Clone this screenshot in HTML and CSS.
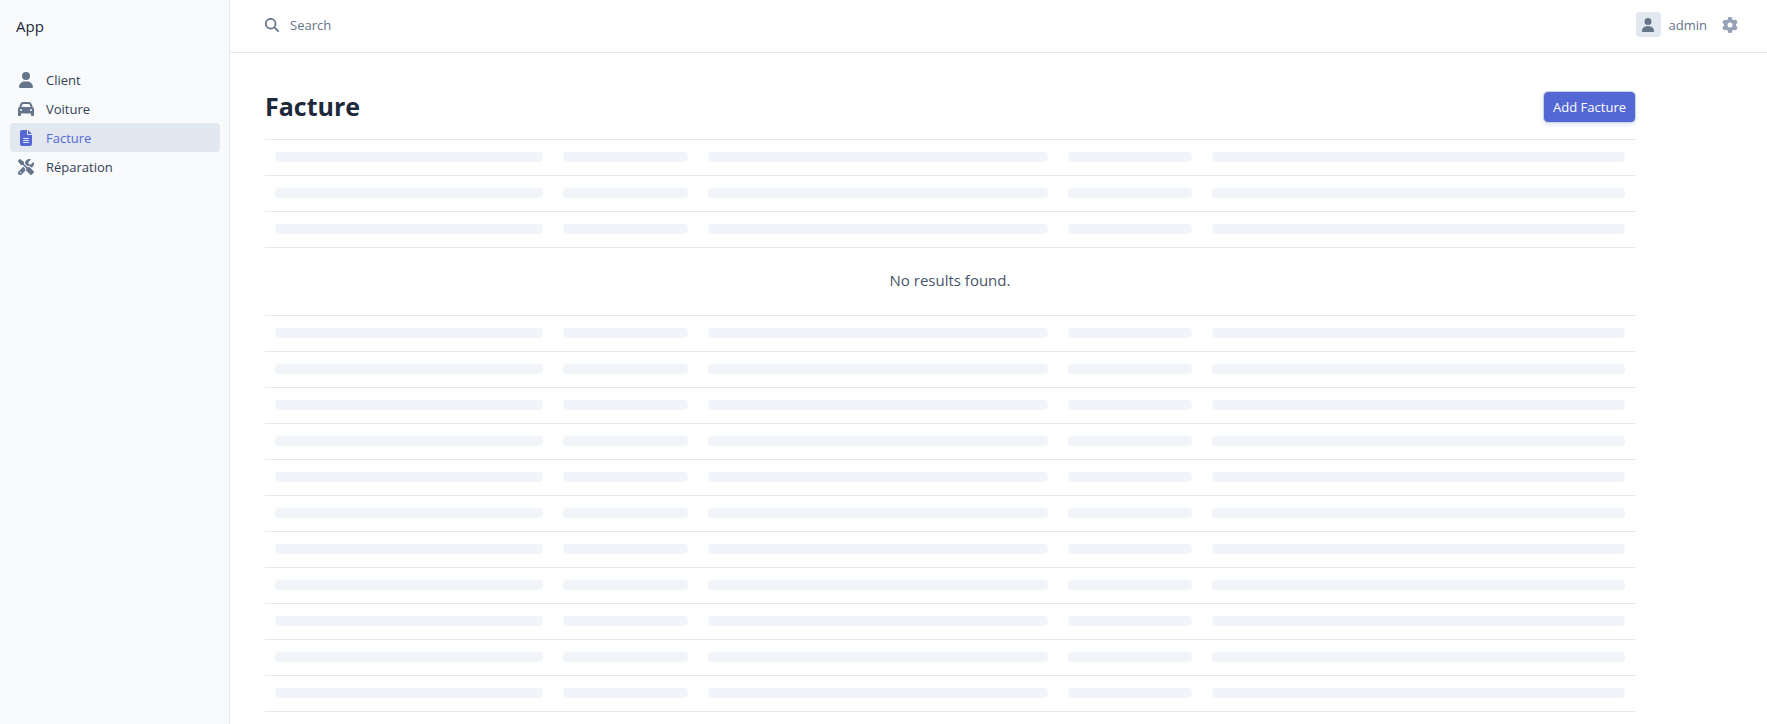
FILE: index.html
```html
<!DOCTYPE html>
<html lang="fr">
<head>
<meta charset="utf-8">
<meta name="viewport" content="width=device-width, initial-scale=1">
<title>Facture</title>
<link rel="stylesheet" href="styles.css">
</head>
<body>
<svg class="sprite" aria-hidden="true">
  <symbol id="user" viewBox="0 0 448 512"><path d="M224 256A128 128 0 1 0 224 0a128 128 0 1 0 0 256zm-45.7 48C79.8 304 0 383.8 0 482.3C0 498.7 13.3 512 29.7 512H418.3c16.4 0 29.7-13.3 29.7-29.7C448 383.8 368.2 304 269.7 304H178.3z"/></symbol>
  <symbol id="car" viewBox="0 0 512 512"><path d="M135.2 117.4L109.1 192H402.9l-26.1-74.6C372.3 104.6 360.2 96 346.6 96H165.4c-13.6 0-25.7 8.6-30.2 21.4zM39.6 196.8L74.8 96.3C88.3 57.8 124.6 32 165.4 32H346.6c40.8 0 77.1 25.8 90.6 64.3l35.2 100.5c23.2 9.6 39.6 32.5 39.6 59.2V400v48c0 17.7-14.3 32-32 32H448c-17.7 0-32-14.3-32-32V400H96v48c0 17.7-14.3 32-32 32H32c-17.7 0-32-14.3-32-32V400 256c0-26.7 16.4-49.6 39.6-59.2zM128 288a32 32 0 1 0 -64 0 32 32 0 1 0 64 0zm288 32a32 32 0 1 0 0-64 32 32 0 1 0 0 64z"/></symbol>
  <symbol id="file" viewBox="0 0 384 512"><path d="M64 0C28.7 0 0 28.7 0 64V448c0 35.3 28.7 64 64 64H320c35.3 0 64-28.7 64-64V160H256c-17.7 0-32-14.3-32-32V0H64zM256 0V128H384L256 0zM112 256H272c8.8 0 16 7.2 16 16s-7.2 16-16 16H112c-8.8 0-16-7.2-16-16s7.2-16 16-16zm0 64H272c8.8 0 16 7.2 16 16s-7.2 16-16 16H112c-8.8 0-16-7.2-16-16s7.2-16 16-16zm0 64H272c8.8 0 16 7.2 16 16s-7.2 16-16 16H112c-8.8 0-16-7.2-16-16s7.2-16 16-16z"/></symbol>
  <symbol id="tools" viewBox="0 0 512 512"><path d="M78.6 5C69.1-2.4 55.6-1.5 47 7L7 47c-8.5 8.5-9.4 22-2.1 31.6l80 104c4.5 5.9 11.6 9.4 19 9.4h54.1l109 109c-14.7 29-10 65.4 14.3 89.6l112 112c12.5 12.5 32.8 12.5 45.3 0l64-64c12.5-12.5 12.5-32.8 0-45.3l-112-112c-24.2-24.2-60.6-29-89.6-14.3l-109-109V104c0-7.5-3.5-14.5-9.4-19L78.6 5zM19.9 396.1C7.2 408.8 0 426.1 0 444.1C0 481.6 30.4 512 67.9 512c18 0 35.3-7.2 48-19.9L233.7 374.3c-7.8-20.9-9-43.6-3.6-65.1l-61.7-61.7L19.9 396.1zM512 144c0-10.5-1.1-20.7-3.2-30.5c-2.4-11.2-16.1-14.1-24.2-6l-63.9 63.9c-3 3-7.1 4.7-11.3 4.7H352c-8.8 0-16-7.2-16-16V102.6c0-4.2 1.7-8.3 4.7-11.3l63.9-63.9c8.1-8.1 5.2-21.8-6-24.2C388.7 1.1 378.5 0 368 0C288.5 0 224 64.5 224 144l0 .8 85.3 85.3c36-9.1 75.8 .5 104 28.7L429 274.5c49-23 83-72.8 83-130.5zM56 432a24 24 0 1 1 48 0 24 24 0 1 1 -48 0z"/></symbol>
  <symbol id="search" viewBox="0 0 512 512"><path d="M416 208c0 45.9-14.9 88.3-40 122.7L502.6 457.4c12.5 12.5 12.5 32.8 0 45.3s-32.8 12.5-45.3 0L330.7 376c-34.4 25.2-76.8 40-122.7 40C93.1 416 0 322.9 0 208S93.1 0 208 0S416 93.1 416 208zM208 352a144 144 0 1 0 0-288 144 144 0 1 0 0 288z"/></symbol>
  <symbol id="gear" viewBox="0 0 512 512"><path d="M495.9 166.6c3.2 8.7 .5 18.4-6.4 24.6l-43.3 39.4c1.1 8.3 1.7 16.8 1.7 25.4s-.6 17.1-1.7 25.4l43.3 39.4c6.9 6.2 9.6 15.9 6.4 24.6c-4.4 11.9-9.7 23.3-15.8 34.3l-4.7 8.1c-6.6 11-14 21.4-22.1 31.2c-5.9 7.2-15.7 9.6-24.5 6.8l-55.7-17.7c-13.4 10.3-28.2 18.9-44 25.4l-12.5 57.1c-2 9.1-9 16.3-18.2 17.8c-13.8 2.3-28 3.5-42.5 3.5s-28.7-1.2-42.5-3.5c-9.2-1.5-16.2-8.7-18.2-17.8l-12.5-57.1c-15.8-6.5-30.6-15.1-44-25.4L83.1 425.9c-8.8 2.8-18.6 .3-24.5-6.8c-8.1-9.8-15.5-20.2-22.1-31.2l-4.7-8.1c-6.1-11-11.4-22.4-15.8-34.3c-3.2-8.7-.5-18.4 6.4-24.6l43.3-39.4C64.6 273.1 64 264.6 64 256s.6-17.1 1.7-25.4L22.4 191.2c-6.9-6.2-9.6-15.9-6.4-24.6c4.4-11.9 9.7-23.3 15.8-34.3l4.7-8.1c6.6-11 14-21.4 22.1-31.2c5.9-7.2 15.7-9.6 24.5-6.8l55.7 17.7c13.4-10.3 28.2-18.9 44-25.4l12.5-57.1c2-9.1 9-16.3 18.2-17.8C227.3 1.2 241.5 0 256 0s28.7 1.2 42.5 3.5c9.2 1.5 16.2 8.7 18.2 17.8l12.5 57.1c15.8 6.5 30.6 15.1 44 25.4l55.7-17.7c8.8-2.8 18.6-.3 24.5 6.8c8.1 9.8 15.5 20.2 22.1 31.2l4.7 8.1c6.1 11 11.4 22.4 15.8 34.3zM256 336a80 80 0 1 0 0-160 80 80 0 1 0 0 160z"/></symbol>
</svg>

<div class="app">
  <aside class="sidebar">
    <a class="brand" href="#">App</a>
    <nav>
      <ul class="menu">
        <li><a class="menu-item" href="#"><svg class="icon"><use href="#user"/></svg>Client</a></li>
        <li><a class="menu-item" href="#"><svg class="icon"><use href="#car"/></svg>Voiture</a></li>
        <li><a class="menu-item active" href="#" aria-current="page"><svg class="icon"><use href="#file"/></svg>Facture</a></li>
        <li><a class="menu-item" href="#"><svg class="icon"><use href="#tools"/></svg>Réparation</a></li>
      </ul>
    </nav>
  </aside>

  <div class="page">
    <header class="topbar">
      <form class="search" role="search">
        <svg class="search-icon"><use href="#search"/></svg>
        <input class="search-input" type="text" placeholder="Search" aria-label="Search">
      </form>
      <div class="account">
        <button class="user" type="button">
          <span class="avatar"><svg class="avatar-icon"><use href="#user"/></svg></span>
          admin
        </button>
        <button class="settings" type="button" aria-label="Settings"><svg class="icon"><use href="#gear"/></svg></button>
      </div>
    </header>

    <main class="content">
      <div class="content-header">
        <h1 class="title">Facture</h1>
        <a class="primary" href="#">Add Facture</a>
      </div>
      <table class="grid">
        <colgroup><col class="col-a"><col class="col-b"><col class="col-c"><col class="col-d"><col class="col-e"></colgroup>
        <tbody>
          <tr><td><span></span></td><td><span></span></td><td><span></span></td><td><span></span></td><td><span></span></td></tr>
          <tr><td><span></span></td><td><span></span></td><td><span></span></td><td><span></span></td><td><span></span></td></tr>
          <tr><td><span></span></td><td><span></span></td><td><span></span></td><td><span></span></td><td><span></span></td></tr>
          <tr><td class="no-results" colspan="5">No results found.</td></tr>
          <tr><td><span></span></td><td><span></span></td><td><span></span></td><td><span></span></td><td><span></span></td></tr>
          <tr><td><span></span></td><td><span></span></td><td><span></span></td><td><span></span></td><td><span></span></td></tr>
          <tr><td><span></span></td><td><span></span></td><td><span></span></td><td><span></span></td><td><span></span></td></tr>
          <tr><td><span></span></td><td><span></span></td><td><span></span></td><td><span></span></td><td><span></span></td></tr>
          <tr><td><span></span></td><td><span></span></td><td><span></span></td><td><span></span></td><td><span></span></td></tr>
          <tr><td><span></span></td><td><span></span></td><td><span></span></td><td><span></span></td><td><span></span></td></tr>
          <tr><td><span></span></td><td><span></span></td><td><span></span></td><td><span></span></td><td><span></span></td></tr>
          <tr><td><span></span></td><td><span></span></td><td><span></span></td><td><span></span></td><td><span></span></td></tr>
          <tr><td><span></span></td><td><span></span></td><td><span></span></td><td><span></span></td><td><span></span></td></tr>
          <tr><td><span></span></td><td><span></span></td><td><span></span></td><td><span></span></td><td><span></span></td></tr>
          <tr><td><span></span></td><td><span></span></td><td><span></span></td><td><span></span></td><td><span></span></td></tr>
        </tbody>
      </table>
    </main>
  </div>
</div>
</body>
</html>
```
FILE: styles.css
```css
* { box-sizing: border-box; }

body {
  margin: 0;
  background: #fff;
  color: #334155;
  font: 13px/20px "Segoe UI", "Open Sans", "Noto Sans", sans-serif;
}

a { color: inherit; text-decoration: none; }
button, input { font: inherit; color: inherit; border: 0; padding: 0; background: none; }
svg { display: block; fill: currentColor; }

.sprite { display: none; }

.app { display: flex; min-height: 100vh; }

.sidebar {
  flex: 0 0 230px;
  padding: 16px 9px 16px 10px;
  background: #f8fafc;
  border-right: 1px solid #e2e8f0;
}

.brand {
  display: block;
  padding: 0 6px;
  margin-bottom: 29px;
  color: #1e293b;
  font-size: 15px;
}

.menu { list-style: none; margin: 0; padding: 0; }

.menu-item {
  display: flex;
  align-items: center;
  gap: 12px;
  height: 29px;
  padding: 0 8px;
  border-radius: 4px;
}

.icon { width: 16px; height: 16px; }
.menu-item .icon { color: #64748b; }
.menu-item.active { background: #e2e8f0; color: #5368d5; }
.menu-item.active .icon { color: #5368d5; }

.page { flex: 1; min-width: 0; }

.topbar {
  display: flex;
  justify-content: space-between;
  align-items: center;
  height: 53px;
  padding: 0 29px 3px 35px;
  border-bottom: 1px solid #e2e8f0;
  color: #64748b;
}

.search { display: flex; align-items: center; gap: 11px; flex: 1; }
.search-icon { width: 14px; height: 14px; }
.search-input { flex: 1; height: 24px; outline: 0; }
.search-input::placeholder { color: #64748b; opacity: 1; }

.account, .user { display: flex; align-items: center; }
.account { gap: 15px; }
.user { gap: 8px; }

.avatar {
  display: grid;
  place-items: center;
  width: 25px;
  height: 25px;
  border-radius: 4px;
  background: #e2e8f0;
}

.avatar-icon { width: 14px; height: 14px; }
.settings { color: #94a3b8; }

.content { max-width: 1440px; padding: 37px 35px 12px; }

.content-header {
  display: flex;
  justify-content: space-between;
  align-items: center;
  padding-bottom: 16px;
}

.title { margin: 0; color: #1e293b; font-size: 25px; line-height: 33px; font-weight: 700; }

.primary {
  padding: 4px 8px;
  border: 1px solid #5368d5;
  border-radius: 4px;
  background: #5368d5;
  color: #fff;
  box-shadow: 0 0 0 1px #cbd5e1, 0 2px 5px 1px #e2e8f0;
}

.grid { width: 100%; border-collapse: separate; border-spacing: 0; table-layout: fixed; border-bottom: 1px solid #e2e8f0; }
.grid td { padding: 12px 10px 13px; border-top: 1px solid #e2e8f0; }
.grid span { display: block; height: 10px; border-radius: 4px; background: #f1f5f9; }
.grid .no-results { padding: 22px 10px 25px; color: #475569; font-size: 15px; text-align: center; }

.col-a { width: 21%; }
.col-b { width: 10.6%; }
.col-c { width: 26.3%; }
.col-d { width: 10.5%; }
.col-e { width: 31.6%; }
```
